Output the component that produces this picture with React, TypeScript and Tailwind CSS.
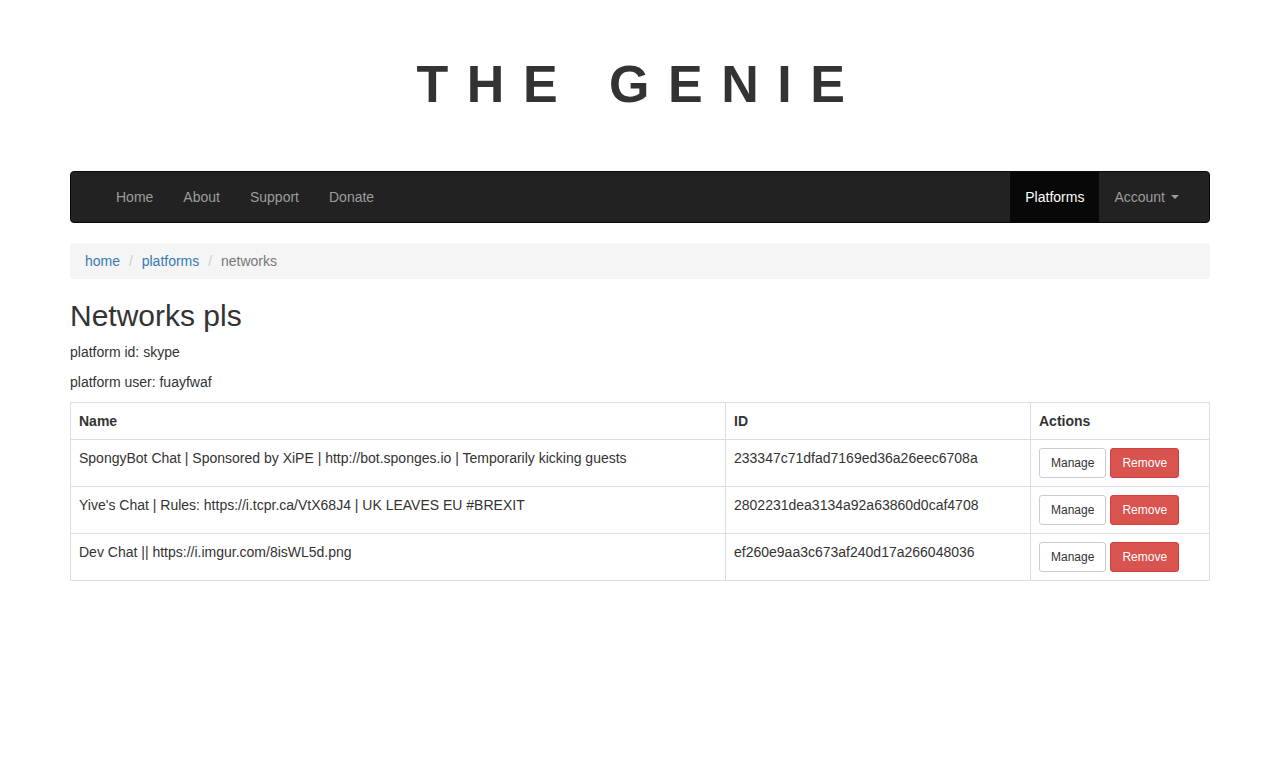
import React from "react";

const rows = [
  { name: "SpongyBot Chat | Sponsored by XiPE | http://bot.sponges.io | Temporarily kicking guests", id: "233347c71dfad7169ed36a26eec6708a" },
  { name: "Yive's Chat | Rules: https://i.tcpr.ca/VtX68J4 | UK LEAVES EU #BREXIT", id: "2802231dea3134a92a63860d0caf4708" },
  { name: "Dev Chat || https://i.imgur.com/8isWL5d.png", id: "ef260e9aa3c673af240d17a266048036" },
];

export default function App() {
  return (
    <div className="min-h-[765px] bg-white text-[14px] leading-[20px] text-[#333]" style={{ fontFamily: '"Liberation Sans", Arial, sans-serif' }}>
      <div className="mx-auto w-[1170px] px-[15px]">
        <div className="flex h-[171px] items-start justify-center pt-[56px]">
          <h1 className="text-[52px] font-bold leading-[56px] tracking-[18.5px] text-[#333]">THE GENIE</h1>
        </div>
        <nav className="flex h-[52px] items-stretch justify-between rounded-[4px] border border-[#080808] bg-[#222] px-[15px]">
          <ul className="flex items-stretch pl-[15px]">
            {["Home", "About", "Support", "Donate"].map((l) => (
              <li key={l} className="flex items-center px-[15px] text-[#9d9d9d]">{l}</li>
            ))}
          </ul>
          <ul className="flex items-stretch">
            <li className="flex items-center bg-[#080808] px-[15px] text-white">Platforms</li>
            <li className="flex items-center px-[15px] text-[#9d9d9d]">
              Account
              <span className="ml-[6px] inline-block h-0 w-0 border-x-[4px] border-t-[4px] border-x-transparent border-t-[#9d9d9d]" />
            </li>
          </ul>
        </nav>
        <div className="mt-[20px] flex h-[36px] items-center rounded-[4px] bg-[#f5f5f5] px-[15px]">
          <span className="text-[#337ab7]">home</span>
          <span className="px-[5px] text-[#ccc]">&nbsp;/&nbsp;</span>
          <span className="text-[#337ab7]">platforms</span>
          <span className="px-[5px] text-[#ccc]">&nbsp;/&nbsp;</span>
          <span className="text-[#777]">networks</span>
        </div>
        <h2 className="mt-[20px] mb-[10px] text-[30px] font-medium leading-[33px]">Networks pls</h2>
        <p className="mb-[10px]">platform id: skype</p>
        <p className="mb-[10px]">platform user: fuayfwaf</p>
        <table className="w-full border-collapse border border-[#ddd]">
          <thead>
            <tr>
              <th className="w-[655px] border border-[#ddd] p-[8px] text-left font-bold leading-[20px]">Name</th>
              <th className="w-[305px] border border-[#ddd] p-[8px] text-left font-bold leading-[20px]">ID</th>
              <th className="border border-[#ddd] p-[8px] text-left font-bold leading-[20px]">Actions</th>
            </tr>
          </thead>
          <tbody>
            {rows.map((r) => (
              <tr key={r.id}>
                <td className="border border-[#ddd] p-[8px] align-top">{r.name}</td>
                <td className="border border-[#ddd] p-[8px] align-top">{r.id}</td>
                <td className="border border-[#ddd] p-[8px] align-top">
                  <div className="flex gap-[4px]">
                    <button className="h-[30px] rounded-[3px] border border-[#ccc] bg-white px-[11px] text-[12px] leading-[18px] text-[#333]">Manage</button>
                    <button className="h-[30px] rounded-[3px] border border-[#d43f3a] bg-[#d9534f] px-[11px] text-[12px] leading-[18px] text-white">Remove</button>
                  </div>
                </td>
              </tr>
            ))}
          </tbody>
        </table>
      </div>
    </div>
  );
}
